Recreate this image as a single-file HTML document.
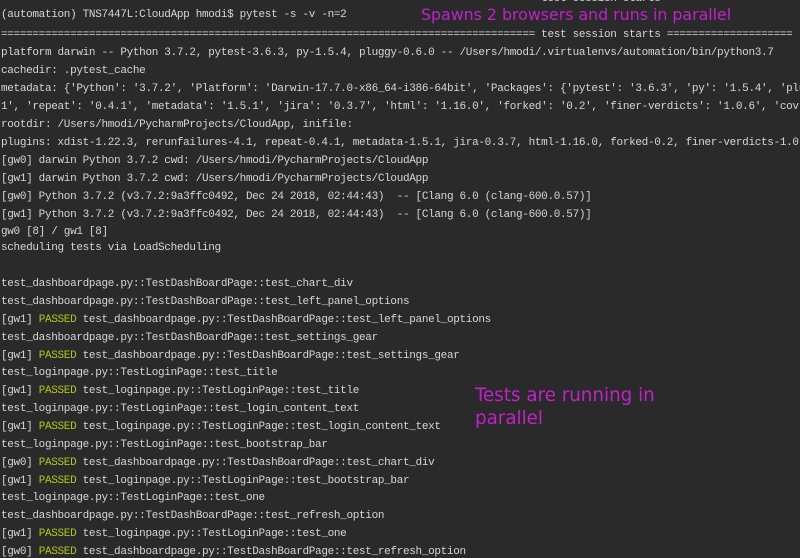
<!DOCTYPE html>
<html><head><meta charset="utf-8"><style>
html,body{margin:0;padding:0;background:#2a2a2a;width:800px;height:558px;overflow:hidden;position:relative}
.l{position:absolute;left:1px;white-space:pre;font-family:"Liberation Mono","DejaVu Sans Mono",monospace;font-size:11px;line-height:18px;height:18px;color:#d6d6d6;letter-spacing:-0.32px}
.p{color:#b5c41c}
.a{position:absolute;white-space:nowrap;font-family:"DejaVu Sans","Liberation Sans",sans-serif;color:#c121c9}
</style></head><body>
<div class="l" style="top:-10px">===================================================================================== test session starts ====================</div>
<div class="l" style="top:6px">(automation) TNS7447L:CloudApp hmodi$ pytest -s -v -n=2</div>
<div class="l" style="top:26px">===================================================================================== test session starts ====================</div>
<div class="l" style="top:44px">platform darwin -- Python 3.7.2, pytest-3.6.3, py-1.5.4, pluggy-0.6.0 -- /Users/hmodi/.virtualenvs/automation/bin/python3.7</div>
<div class="l" style="top:62px">cachedir: .pytest_cache</div>
<div class="l" style="top:80px">metadata: {'Python': '3.7.2', 'Platform': 'Darwin-17.7.0-x86_64-i386-64bit', 'Packages': {'pytest': '3.6.3', 'py': '1.5.4', 'plug</div>
<div class="l" style="top:98px">1', 'repeat': '0.4.1', 'metadata': '1.5.1', 'jira': '0.3.7', 'html': '1.16.0', 'forked': '0.2', 'finer-verdicts': '1.0.6', 'cov':</div>
<div class="l" style="top:116px">rootdir: /Users/hmodi/PycharmProjects/CloudApp, inifile:</div>
<div class="l" style="top:134px">plugins: xdist-1.22.3, rerunfailures-4.1, repeat-0.4.1, metadata-1.5.1, jira-0.3.7, html-1.16.0, forked-0.2, finer-verdicts-1.0.6</div>
<div class="l" style="top:152px">[gw0] darwin Python 3.7.2 cwd: /Users/hmodi/PycharmProjects/CloudApp</div>
<div class="l" style="top:170px">[gw1] darwin Python 3.7.2 cwd: /Users/hmodi/PycharmProjects/CloudApp</div>
<div class="l" style="top:188px">[gw0] Python 3.7.2 (v3.7.2:9a3ffc0492, Dec 24 2018, 02:44:43)  -- [Clang 6.0 (clang-600.0.57)]</div>
<div class="l" style="top:206px">[gw1] Python 3.7.2 (v3.7.2:9a3ffc0492, Dec 24 2018, 02:44:43)  -- [Clang 6.0 (clang-600.0.57)]</div>
<div class="l" style="top:223px">gw0 [8] / gw1 [8]</div>
<div class="l" style="top:239px">scheduling tests via LoadScheduling</div>
<div class="l" style="top:275px">test_dashboardpage.py::TestDashBoardPage::test_chart_div</div>
<div class="l" style="top:293px">test_dashboardpage.py::TestDashBoardPage::test_left_panel_options</div>
<div class="l" style="top:311px">[gw1] <span class="p">PASSED</span> test_dashboardpage.py::TestDashBoardPage::test_left_panel_options</div>
<div class="l" style="top:329px">test_dashboardpage.py::TestDashBoardPage::test_settings_gear</div>
<div class="l" style="top:347px">[gw1] <span class="p">PASSED</span> test_dashboardpage.py::TestDashBoardPage::test_settings_gear</div>
<div class="l" style="top:364px">test_loginpage.py::TestLoginPage::test_title</div>
<div class="l" style="top:382px">[gw1] <span class="p">PASSED</span> test_loginpage.py::TestLoginPage::test_title</div>
<div class="l" style="top:400px">test_loginpage.py::TestLoginPage::test_login_content_text</div>
<div class="l" style="top:418px">[gw1] <span class="p">PASSED</span> test_loginpage.py::TestLoginPage::test_login_content_text</div>
<div class="l" style="top:436px">test_loginpage.py::TestLoginPage::test_bootstrap_bar</div>
<div class="l" style="top:454px">[gw0] <span class="p">PASSED</span> test_dashboardpage.py::TestDashBoardPage::test_chart_div</div>
<div class="l" style="top:472px">[gw1] <span class="p">PASSED</span> test_loginpage.py::TestLoginPage::test_bootstrap_bar</div>
<div class="l" style="top:489px">test_loginpage.py::TestLoginPage::test_one</div>
<div class="l" style="top:507px">test_dashboardpage.py::TestDashBoardPage::test_refresh_option</div>
<div class="l" style="top:525px">[gw1] <span class="p">PASSED</span> test_loginpage.py::TestLoginPage::test_one</div>
<div class="l" style="top:543px">[gw0] <span class="p">PASSED</span> test_dashboardpage.py::TestDashBoardPage::test_refresh_option</div>
<div class="a" style="left:421px;top:5px;font-size:15.8px;background:#2a2a2a;padding-right:6px">Spawns 2 browsers and runs in parallel</div>
<div class="a" style="left:475px;top:384px;font-size:18.3px;line-height:23px">Tests are running in<br>parallel</div>
</body></html>
